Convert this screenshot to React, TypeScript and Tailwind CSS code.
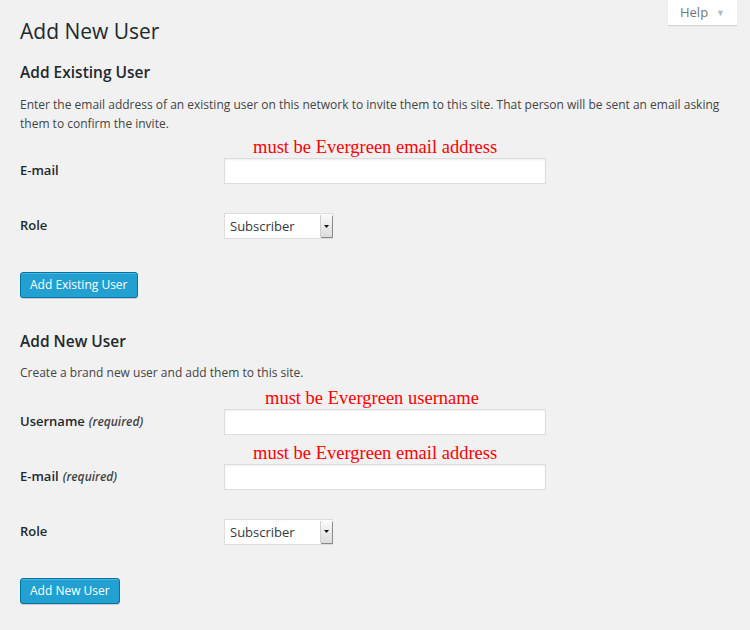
import React from "react";

const Note = ({ text, left }: { text: string; left: string }) => (
  <span
    className={`absolute bottom-full mb-[1px] whitespace-nowrap text-[18.5px] leading-[20px] text-[#ff0000] font-['Liberation_Serif',serif] ${left}`}
  >
    {text}
  </span>
);

const TextField = ({ note, noteLeft }: { note?: string; noteLeft?: string }) => (
  <div className="relative">
    {note && <Note text={note} left={noteLeft || "left-[29px]"} />}
    <div className="h-[26px] w-[322px] border border-[#dddddd] bg-white shadow-[inset_0_1px_2px_rgba(0,0,0,0.07)]" />
  </div>
);

const RoleSelect = () => (
  <div className="flex h-[26px] w-[109px] items-stretch border border-[#dddddd] bg-white">
    <span className="flex-1 pl-[5px] text-[13px] leading-[24px] text-[#32373c]">Subscriber</span>
    <span className="my-[1px] flex w-[12px] items-center justify-center border-l border-[#cfcfcf] bg-gradient-to-b from-[#fafafa] to-[#dcdcdc] shadow-[1px_1px_0_#8a8a8a]">
      <svg width="5" height="3" viewBox="0 0 5 3">
        <path d="M0 0h5L2.5 3z" fill="#111" />
      </svg>
    </span>
  </div>
);

const Row = ({
  label,
  required,
  children,
}: {
  label: string;
  required?: boolean;
  children: React.ReactNode;
}) => (
  <div className="flex h-[55px] items-center">
    <div className="w-[204px] text-[13px] font-semibold text-[#23282d]">
      {label}
      {required && <em className="ml-[4px] text-[12px] font-semibold text-[#444]">(required)</em>}
    </div>
    {children}
  </div>
);

const PrimaryButton = ({ label }: { label: string }) => (
  <button className="h-[26px] rounded-[3px] border border-[#0074a2] bg-[#22a0d2] px-[9px] text-[12px] leading-[24px] text-white shadow-[inset_0_1px_0_rgba(120,200,230,0.5),0_1px_0_rgba(0,0,0,0.15)]">
    {label}
  </button>
);

export default function App() {
  return (
    <div className="min-h-screen bg-[#f1f1f1] pl-[20px] pr-[13px] font-['Open_Sans',sans-serif] text-[#444]">
      <div className="flex items-start justify-between">
        <h1 className="pt-[17px] text-[21px] font-normal leading-[29px] text-[#23282d]">Add New User</h1>
        <div className="flex h-[25px] w-[69px] items-center justify-center gap-[8px] bg-white shadow-[0_1px_1px_rgba(0,0,0,0.12)]">
          <span className="text-[13px] text-[#72777c]">Help</span>
          <span className="text-[9px] text-[#b4b9be]">▼</span>
        </div>
      </div>

      <h3 className="mt-[15px] text-[15.5px] font-semibold leading-[22px] text-[#23282d]">Add Existing User</h3>
      <p className="mt-[12px] text-[12px] leading-[19px]">
        Enter the email address of an existing user on this network to invite them to this site. That person will be sent an email asking them to confirm the invite.
      </p>

      <div className="mt-[10.5px]">
        <Row label="E-mail">
          <TextField note="must be Evergreen email address" noteLeft="left-[29px]" />
        </Row>
        <Row label="Role">
          <RoleSelect />
        </Row>
      </div>
      <div className="mt-[17px]">
        <PrimaryButton label="Add Existing User" />
      </div>

      <h3 className="mt-[32px] text-[15.5px] font-semibold leading-[22px] text-[#23282d]">Add New User</h3>
      <p className="mt-[11.5px] text-[12px] leading-[19px]">Create a brand new user and add them to this site.</p>

      <div className="mt-[12px]">
        <Row label="Username" required>
          <TextField note="must be Evergreen username" noteLeft="left-[41px]" />
        </Row>
        <Row label="E-mail" required>
          <TextField note="must be Evergreen email address" noteLeft="left-[29px]" />
        </Row>
        <Row label="Role">
          <RoleSelect />
        </Row>
      </div>
      <div className="mt-[18px] pb-[27px]">
        <PrimaryButton label="Add New User" />
      </div>
    </div>
  );
}
